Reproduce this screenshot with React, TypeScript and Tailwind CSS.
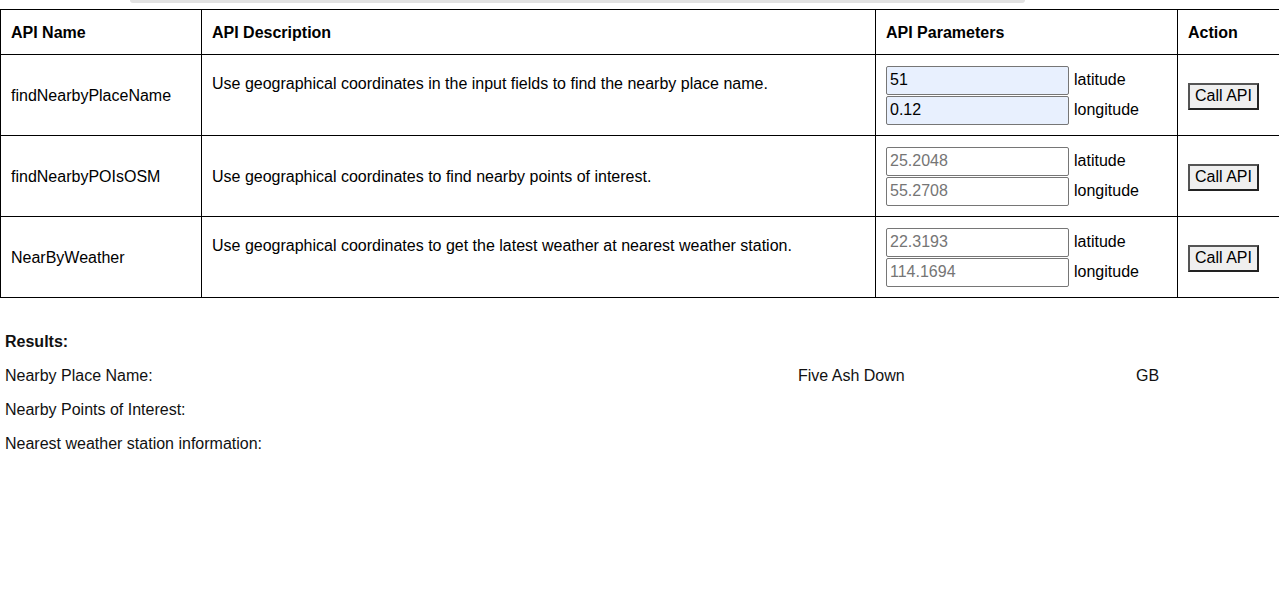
import React from "react";

type Row = {
  name: string;
  desc: string;
  extraLine: boolean;
  lat: string;
  lon: string;
  filled: boolean;
};

const rows: Row[] = [
  {
    name: "findNearbyPlaceName",
    desc: "Use geographical coordinates in the input fields to find the nearby place name.",
    extraLine: true,
    lat: "51",
    lon: "0.12",
    filled: true,
  },
  {
    name: "findNearbyPOIsOSM",
    desc: "Use geographical coordinates to find nearby points of interest.",
    extraLine: false,
    lat: "25.2048",
    lon: "55.2708",
    filled: false,
  },
  {
    name: "NearByWeather",
    desc: "Use geographical coordinates to get the latest weather at nearest weather station.",
    extraLine: true,
    lat: "22.3193",
    lon: "114.1694",
    filled: false,
  },
];

function Field({ value, filled, label }: { value: string; filled: boolean; label: string }) {
  return (
    <div className="flex items-center h-[30px]">
      {filled ? (
        <input
          readOnly
          defaultValue={value}
          className="w-[183px] h-[29px] px-[3px] border border-[#767676] rounded-[2px] bg-[#e8f0fe] text-[16px] text-black outline-none"
        />
      ) : (
        <input
          readOnly
          placeholder={value}
          className="w-[183px] h-[29px] px-[3px] border border-[#767676] rounded-[2px] bg-white text-[16px] text-black placeholder:text-[#757575] outline-none"
        />
      )}
      <span className="ml-[5px] text-[16px] text-black">{label}</span>
    </div>
  );
}

export default function App() {
  return (
    <div
      className="w-[1279px] min-h-[611px] bg-white text-black overflow-hidden"
      style={{ fontFamily: '"Liberation Sans", Arial, sans-serif' }}
    >
      <div className="ml-[130px] w-[895px] h-[3px] rounded-b-full bg-[#e2e2e2]" />
      <div className="mt-[6px] w-[1279px] overflow-hidden">
        <table className="border-collapse w-[1290px] table-fixed text-[16px]">
          <colgroup>
            <col className="w-[201px]" />
            <col className="w-[674px]" />
            <col className="w-[302px]" />
            <col />
          </colgroup>
          <thead>
            <tr className="h-[45px]">
              <th className="border border-black px-[10px] pt-[2px] text-left font-bold">API Name</th>
              <th className="border border-black px-[10px] pt-[2px] text-left font-bold">API Description</th>
              <th className="border border-black px-[10px] pt-[2px] text-left font-bold">API Parameters</th>
              <th className="border border-black px-[10px] pt-[2px] text-left font-bold">Action</th>
            </tr>
          </thead>
          <tbody>
            {rows.map((r) => (
              <tr key={r.name} className="h-[81px]">
                <td className="border border-black px-[10px] pt-[2px] align-middle">{r.name}</td>
                <td className="border border-black px-[10px] align-middle leading-[23px]">
                  <div>{r.desc}</div>
                  {r.extraLine && <div className="h-[23px]" />}
                </td>
                <td className="border border-black px-[10px] align-middle">
                  <Field value={r.lat} filled={r.filled} label="latitude" />
                  <Field value={r.lon} filled={r.filled} label="longitude" />
                </td>
                <td className="border border-black px-[10px] pt-[2px] align-middle">
                  <button className="h-[27px] w-[71px] px-0 bg-[#efefef] border-2 border-t-[#555] border-l-[#555] border-b-[#222] border-r-[#222] text-[16px] text-black leading-none">
                    Call API
                  </button>
                </td>
              </tr>
            ))}
          </tbody>
        </table>
      </div>

      <div className="pl-[5px] pt-[27px] text-[16px] text-[#111]">
        <div className="h-[34px] flex items-center font-bold">Results:</div>
        <div className="h-[34px] flex items-center">
          <span className="w-[793px]">Nearby Place Name:</span>
          <span className="w-[338px]">Five Ash Down</span>
          <span>GB</span>
        </div>
        <div className="h-[34px] flex items-center">Nearby Points of Interest:</div>
        <div className="h-[34px] flex items-center">Nearest weather station information:</div>
      </div>
    </div>
  );
}
